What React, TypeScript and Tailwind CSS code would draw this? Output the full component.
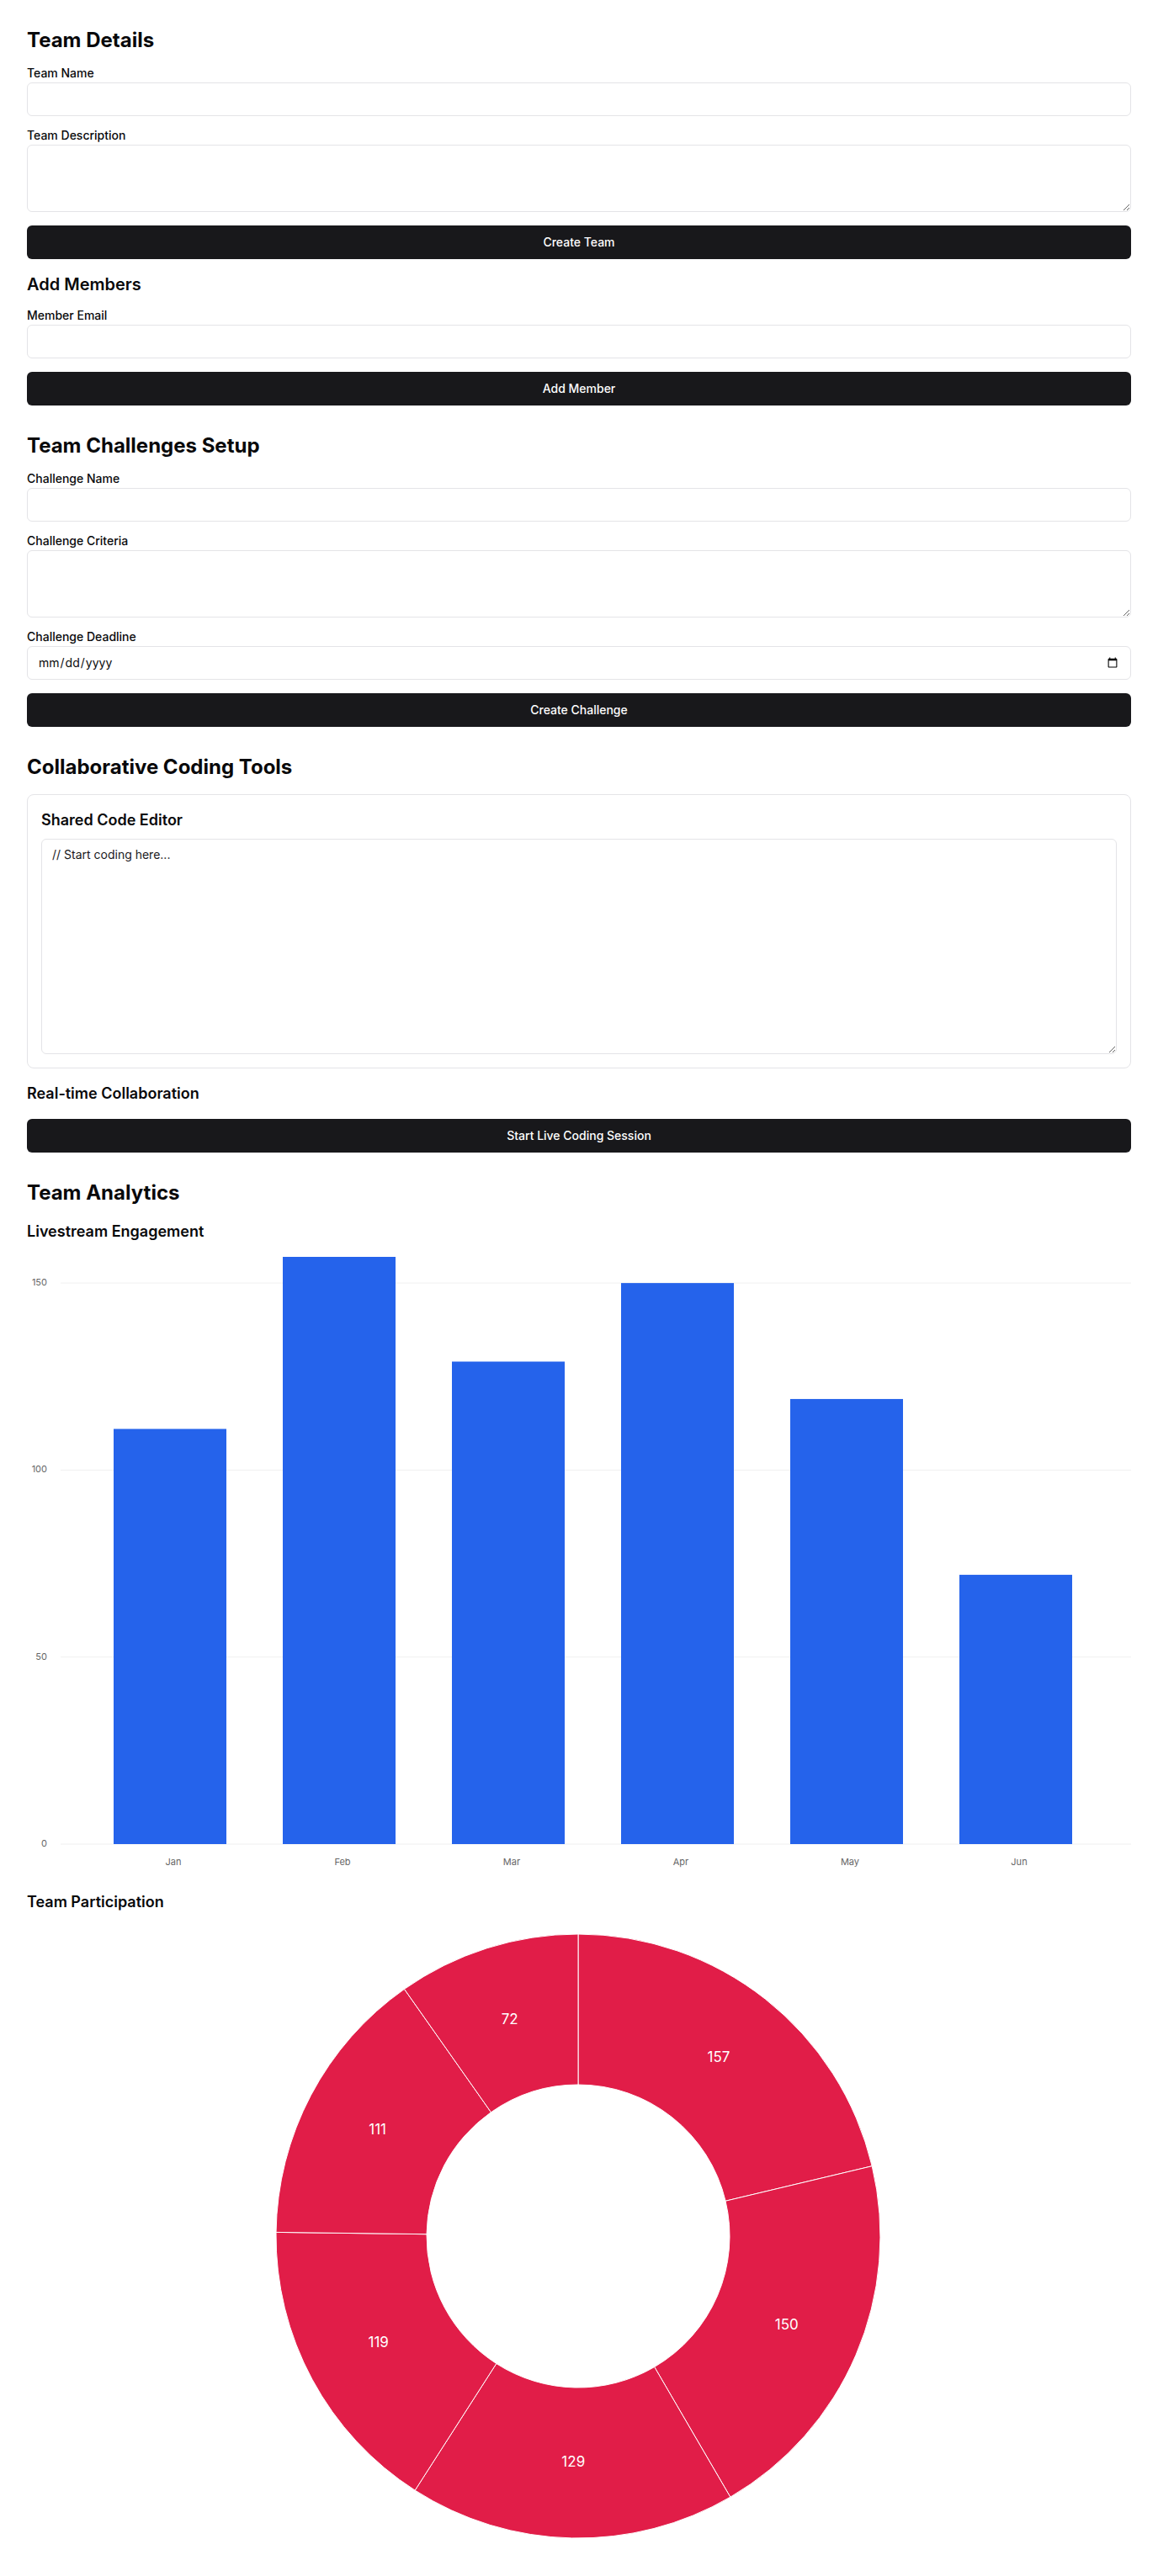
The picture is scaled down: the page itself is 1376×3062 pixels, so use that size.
import { ReactNode } from 'react';

const engagement = [
  { month: 'Jan', value: 111 },
  { month: 'Feb', value: 157 },
  { month: 'Mar', value: 129 },
  { month: 'Apr', value: 150 },
  { month: 'May', value: 119 },
  { month: 'Jun', value: 72 },
];

// participation slices, clockwise from 12 o'clock
const participation = [157, 150, 129, 119, 111, 72];

function Field({ label, children }: { label: string; children: ReactNode }) {
  return (
    <div className="mb-4">
      <label className="block text-sm font-medium leading-none mb-1 text-zinc-950">{label}</label>
      {children}
    </div>
  );
}

function PrimaryButton({ children }: { children: ReactNode }) {
  return (
    <button
      type="button"
      className="flex h-10 w-full items-center justify-center rounded-md bg-[#18181b] px-4 text-sm font-medium text-white"
    >
      {children}
    </button>
  );
}

const inputCls =
  'flex h-10 w-full rounded-md border border-zinc-200 bg-white px-3 py-2 text-sm text-zinc-950 outline-none';

function BarChart() {
  const W = 1312;
  const H = 737;
  const base = 698;
  const k = 698 / 157;
  const ticks = [0, 50, 100, 150];
  return (
    <svg viewBox={`0 0 ${W} ${H}`} width={W} height={H} className="block w-full">
      {ticks.map((t) => (
        <g key={t}>
          <line x1={40} x2={1312} y1={base - t * k} y2={base - t * k} stroke="#f0f0f0" strokeWidth={1} />
          <text x={24} y={base - t * k} textAnchor="end" dominantBaseline="middle" fontSize={11} fill="#666">
            {t}
          </text>
        </g>
      ))}
      {engagement.map((d, i) => {
        const x = 103 + 201 * i;
        const h = d.value * k;
        return (
          <g key={d.month}>
            <rect x={x} y={base - h} width={134} height={h} fill="#2563eb" />
            <text x={x + 71} y={720} textAnchor="middle" dominantBaseline="middle" fontSize={11} fill="#666">
              {d.month}
            </text>
          </g>
        );
      })}
    </svg>
  );
}

function DonutChart() {
  const W = 1312;
  const H = 738;
  const cx = 655;
  const cy = 367;
  const R = 359;
  const r = 180;
  const total = participation.reduce((a, b) => a + b, 0);
  let acc = 0;
  const pt = (rad: number, deg: number) => {
    const a = ((deg - 90) * Math.PI) / 180;
    return [cx + rad * Math.cos(a), cy + rad * Math.sin(a)];
  };
  return (
    <svg viewBox={`0 0 ${W} ${H}`} width={W} height={H} className="block w-full">
      {participation.map((v, i) => {
        const a0 = (acc / total) * 360;
        acc += v;
        const a1 = (acc / total) * 360;
        const large = a1 - a0 > 180 ? 1 : 0;
        const [x0, y0] = pt(R, a0);
        const [x1, y1] = pt(R, a1);
        const [x2, y2] = pt(r, a1);
        const [x3, y3] = pt(r, a0);
        const d = `M${x0},${y0} A${R},${R} 0 ${large} 1 ${x1},${y1} L${x2},${y2} A${r},${r} 0 ${large} 0 ${x3},${y3} Z`;
        const [lx, ly] = pt((R + r) / 2, (a0 + a1) / 2);
        return (
          <g key={i}>
            <path d={d} fill="#e11d48" stroke="#fff" strokeWidth={1} />
            <text x={lx} y={ly} textAnchor="middle" dominantBaseline="middle" fontSize={17} fill="#fff">
              {v}
            </text>
          </g>
        );
      })}
    </svg>
  );
}

export default function App() {
  return (
    <div className="min-h-screen bg-white p-8 text-zinc-950 font-['Inter',sans-serif]">
      {/* Team details + members */}
      <section className="mb-8">
        <h2 className="text-2xl font-bold mb-4">Team Details</h2>
        <Field label="Team Name">
          <input type="text" className={inputCls} />
        </Field>
        <Field label="Team Description">
          <textarea className="flex min-h-[80px] h-20 w-full rounded-md border border-zinc-200 bg-white px-3 py-2 text-sm outline-none" />
        </Field>
        <PrimaryButton>Create Team</PrimaryButton>

        <h3 className="text-xl font-semibold mt-4 mb-4">Add Members</h3>
        <Field label="Member Email">
          <input type="email" className={inputCls} />
        </Field>
        <PrimaryButton>Add Member</PrimaryButton>
      </section>

      {/* Challenges */}
      <section className="mb-8">
        <h2 className="text-2xl font-bold mb-4">Team Challenges Setup</h2>
        <Field label="Challenge Name">
          <input type="text" className={inputCls} />
        </Field>
        <Field label="Challenge Criteria">
          <textarea className="flex min-h-[80px] h-20 w-full rounded-md border border-zinc-200 bg-white px-3 py-2 text-sm outline-none" />
        </Field>
        <Field label="Challenge Deadline">
          <input
            type="date"
            className="block h-10 w-full rounded-md border border-zinc-200 bg-white px-3 py-2 text-sm text-zinc-950 outline-none [&::-webkit-datetime-edit]:flex-1 [&::-webkit-calendar-picker-indicator]:ml-auto"
          />
        </Field>
        <PrimaryButton>Create Challenge</PrimaryButton>
      </section>

      {/* Coding tools */}
      <section className="mb-8">
        <h2 className="text-2xl font-bold mb-4">Collaborative Coding Tools</h2>
        <div className="rounded-lg border border-zinc-200 p-4 mb-4">
          <h3 className="text-lg font-semibold mb-2">Shared Code Editor</h3>
          <textarea
            defaultValue="// Start coding here..."
            className="block h-64 w-full rounded-md border border-zinc-200 bg-white px-3 py-2 text-sm text-zinc-900 outline-none"
          />
        </div>
        <h3 className="text-lg font-semibold mb-4">Real-time Collaboration</h3>
        <PrimaryButton>Start Live Coding Session</PrimaryButton>
      </section>

      {/* Analytics */}
      <section>
        <h2 className="text-2xl font-bold mb-4">Team Analytics</h2>
        <h3 className="text-lg font-semibold mb-4">Livestream Engagement</h3>
        <BarChart />
        <h3 className="text-lg font-semibold mt-4 mb-4">Team Participation</h3>
        <DonutChart />
      </section>
    </div>
  );
}
